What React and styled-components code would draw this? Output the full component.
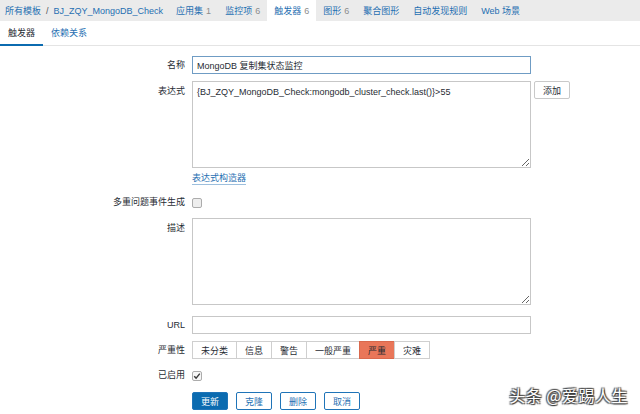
import React from "react";
import styled, { createGlobalStyle } from "styled-components";

// Top navigation
const navTabs = [
  { text: "应用集", count: 1 },
  { text: "监控项", count: 6 },
  { text: "触发器", count: 6, active: true },
  { text: "图形", count: 6 },
  { text: "聚合图形" },
  { text: "自动发现规则" },
  { text: "Web 场景" },
];

const severities = [
  { text: "未分类" },
  { text: "信息" },
  { text: "警告" },
  { text: "一般严重" },
  { text: "严重", selected: true },
  { text: "灾难" },
];

const GlobalStyle = createGlobalStyle`
  html, body {
    margin: 0;
    padding: 0;
    background: #ffffff;
  }
  body {
    font-family: "Liberation Sans", Arial, "Noto Sans CJK SC", sans-serif;
    font-size: 9px;
    color: #1f2c33;
  }
`;

const App = () => {
  return (
    <Page>
      <GlobalStyle />
      <TopNav>
        <Crumb href="#">所有模板</Crumb>
        <Separator>/</Separator>
        <Crumb href="#">BJ_ZQY_MongoDB_Check</Crumb>
        <NavList>
          {navTabs.map((tab) => (
            <NavTab key={tab.text} $active={tab.active}>
              <NavLink>{tab.text}</NavLink>
              {tab.count !== undefined && <Count>{tab.count}</Count>}
            </NavTab>
          ))}
        </NavList>
      </TopNav>

      <SubTabs>
        <SubTab $active>触发器</SubTab>
        <SubTab>依赖关系</SubTab>
      </SubTabs>

      <Form>
        <Row $top={10}>
          <Label>名称</Label>
          <TextInput $focused defaultValue="MongoDB 复制集状态监控" />
        </Row>

        <Row $top={7}>
          <Label $pad={5}>表达式</Label>
          <TextArea
            $height={87}
            defaultValue="{BJ_ZQY_MongoDB_Check:mongodb_cluster_check.last()}>55"
          />
          <SmallButton>添加</SmallButton>
        </Row>

        <Row $top={5}>
          <Label />
          <BuilderLink href="#">表达式构造器</BuilderLink>
        </Row>

        <Row $top={12} $center>
          <Label $pad={0}>多重问题事件生成</Label>
          <CheckBox />
        </Row>

        <Row $top={10}>
          <Label $pad={5}>描述</Label>
          <TextArea $height={87} defaultValue="" />
        </Row>

        <Row $top={11}>
          <Label>URL</Label>
          <TextInput defaultValue="" />
        </Row>

        <Row $top={7}>
          <Label>严重性</Label>
          <Segmented>
            {severities.map((s) => (
              <Segment key={s.text} $selected={s.selected}>
                {s.text}
              </Segment>
            ))}
          </Segmented>
        </Row>

        <Row $top={11} $center>
          <Label $pad={0}>已启用</Label>
          <CheckBox $checked>
            <svg width="8" height="8" viewBox="0 0 8 8">
              <path
                d="M1.2 4.2 L3.1 6.1 L6.8 1.6"
                fill="none"
                stroke="#3a3a3a"
                strokeWidth="1.4"
              />
            </svg>
          </CheckBox>
        </Row>

        <Row $top={11}>
          <Label />
          <Actions>
            <ActionButton $primary>更新</ActionButton>
            <ActionButton>克隆</ActionButton>
            <ActionButton>删除</ActionButton>
            <ActionButton>取消</ActionButton>
          </Actions>
        </Row>
      </Form>

      <Watermark>头条 @爱踢人生</Watermark>
    </Page>
  );
};

const Page = styled.div`
  position: relative;
  width: 640px;
  height: 414px;
  overflow: hidden;
  background: #ffffff;
`;

const TopNav = styled.div`
  display: flex;
  align-items: stretch;
  height: 21px;
  background: #ebebeb;
  padding-left: 5px;
`;

const Crumb = styled.a`
  display: flex;
  align-items: center;
  color: #1f6fb2;
  text-decoration: none;
`;

const Separator = styled.span`
  display: flex;
  align-items: center;
  padding: 0 5px;
  color: #555;
`;

const NavList = styled.div`
  display: flex;
  margin-left: 6px;
`;

const NavTab = styled.div`
  display: flex;
  align-items: center;
  gap: 3px;
  padding: 0 7px;
  background: ${(p) => (p.$active ? "#ffffff" : "transparent")};
`;

const NavLink = styled.span`
  color: #1f6fb2;
`;

const Count = styled.span`
  color: #8c8c8c;
`;

const SubTabs = styled.div`
  display: flex;
  height: 24px;
  border-bottom: 1px solid #e4e4e4;
`;

const SubTab = styled.div`
  display: flex;
  align-items: center;
  padding: 0 8px;
  color: ${(p) => (p.$active ? "#1f2c33" : "#1f6fb2")};
  border-bottom: 2px solid ${(p) => (p.$active ? "#0b6bb0" : "transparent")};
  margin-bottom: -1px;
`;

const Form = styled.div`
  display: flex;
  flex-direction: column;
`;

const Row = styled.div`
  display: flex;
  align-items: ${(p) => (p.$center ? "center" : "flex-start")};
  margin-top: ${(p) => p.$top}px;
`;

const Label = styled.div`
  width: 192px;
  flex: none;
  text-align: right;
  padding-right: 7px;
  box-sizing: border-box;
  padding-top: ${(p) => (p.$pad !== undefined ? p.$pad : 4)}px;
  color: #1f2c33;
  line-height: 11px;
`;

const TextInput = styled.input`
  width: 339px;
  height: 18px;
  box-sizing: border-box;
  margin: 0;
  padding: 0 4px;
  border: 1px solid ${(p) => (p.$focused ? "#6f9cc4" : "#c7c7c7")};
  font-family: inherit;
  font-size: 9px;
  color: #1f2c33;
  outline: none;
  background: #fff;
`;

const TextArea = styled.textarea`
  width: 339px;
  height: ${(p) => p.$height}px;
  box-sizing: border-box;
  margin: 0;
  padding: 5px 4px;
  border: 1px solid #c7c7c7;
  font-family: inherit;
  font-size: 9px;
  line-height: 11px;
  color: #1f2c33;
  resize: vertical;
  outline: none;
  background: #fff;
`;

const SmallButton = styled.button`
  margin-left: 3px;
  height: 18px;
  width: 36px;
  padding: 0;
  border: 1px solid #c9c9c9;
  border-radius: 2px;
  background: #fff;
  font-family: inherit;
  font-size: 9px;
  color: #1f2c33;
`;

const BuilderLink = styled.a`
  color: #1f6fb2;
  text-decoration: none;
  border-bottom: 1px solid #9dbfdd;
  line-height: 11px;
`;

const CheckBox = styled.span`
  display: flex;
  align-items: center;
  justify-content: center;
  width: 10px;
  height: 10px;
  box-sizing: border-box;
  border: 1px solid #acacac;
  border-radius: 2px;
  background: ${(p) => (p.$checked ? "#f6f6f6" : "#eeeeee")};
`;

const Segmented = styled.div`
  display: flex;
  height: 18px;
`;

const Segment = styled.div`
  display: flex;
  align-items: center;
  padding: 0 8px;
  border: 1px solid ${(p) => (p.$selected ? "#d9694d" : "#cfcfcf")};
  margin-left: -1px;
  background: ${(p) => (p.$selected ? "#e97659" : "#ffffff")};
  color: #1f2c33;
  &:first-child {
    margin-left: 0;
  }
`;

const Actions = styled.div`
  display: flex;
  gap: 8px;
`;

const ActionButton = styled.button`
  width: 36px;
  height: 18px;
  padding: 0;
  border-radius: 2px;
  border: 1px solid #1f74b8;
  background: ${(p) => (p.$primary ? "#0b6bb0" : "#ffffff")};
  color: ${(p) => (p.$primary ? "#ffffff" : "#1f6fb2")};
  font-family: inherit;
  font-size: 9px;
`;

const Watermark = styled.div`
  position: absolute;
  right: 12px;
  bottom: 7px;
  font-family: "Noto Sans CJK SC", sans-serif;
  font-size: 16px;
  color: #ffffff;
  text-shadow: 1px 1px 1px #333, -1px -1px 1px #555, 1px -1px 1px #555,
    -1px 1px 1px #555;
  letter-spacing: 0.5px;
`;

export default App;
